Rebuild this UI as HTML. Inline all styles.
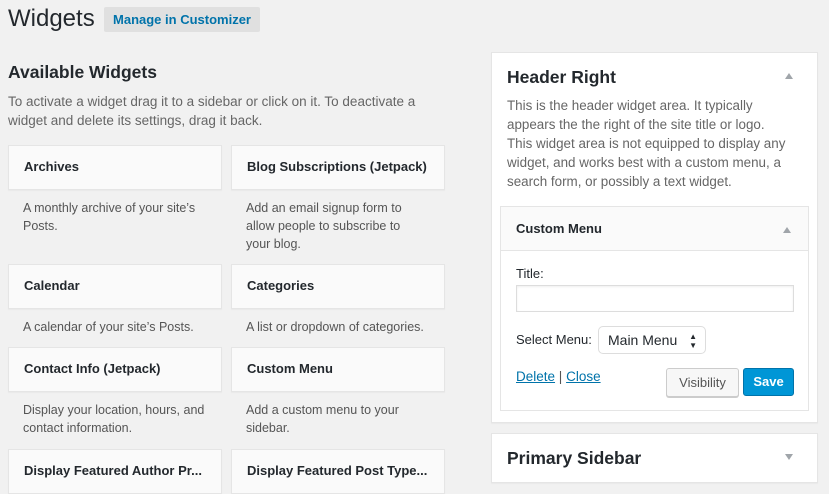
<!DOCTYPE html>
<html><head><meta charset="utf-8"><style>
*{box-sizing:border-box;margin:0;padding:0}
body{width:829px;height:491px;overflow:hidden;background:#f1f1f1;font-family:"Liberation Sans",sans-serif;color:#23282d;position:relative}
.a{position:absolute;white-space:nowrap}
.box{position:absolute;background:#fafafa;border:1px solid #e5e5e5;box-shadow:0 1px 1px rgba(0,0,0,.04);font-size:13px;font-weight:bold;padding:0 0 0 15px;line-height:42px;color:#23282d}
.d{position:absolute;font-size:12.5px;color:#555;line-height:18px;width:190px}
.panel{position:absolute;background:#fff;border:1px solid #e5e5e5;box-shadow:0 1px 1px rgba(0,0,0,.04)}
.tri{position:absolute;width:0;height:0;border-left:4px solid transparent;border-right:4px solid transparent}
</style></head><body>
<div class="a" style="left:8px;top:5px;font-size:24px;color:#23282d">Widgets</div>
<div class="a" style="left:104px;top:7px;width:156px;height:25px;background:#e0e0e0;border-radius:2px;color:#0073aa;font-size:13px;font-weight:bold;line-height:25px;text-align:center">Manage in Customizer</div>
<div class="a" style="left:8px;top:62px;font-size:17.5px;font-weight:bold">Available Widgets</div>
<div class="a" style="left:8px;top:92px;font-size:13.5px;color:#666;line-height:19px;white-space:normal;width:440px">To activate a widget drag it to a sidebar or click on it. To deactivate a widget and delete its settings, drag it back.</div>

<div class="box" style="left:8px;top:145px;width:214px;height:45px">Archives</div>
<div class="box" style="left:231px;top:145px;width:214px;height:45px">Blog Subscriptions (Jetpack)</div>
<div class="d" style="left:23px;top:199px">A monthly archive of your site’s Posts.</div>
<div class="d" style="left:246px;top:199px;width:175px">Add an email signup form to allow people to subscribe to your blog.</div>

<div class="box" style="left:8px;top:264px;width:214px;height:45px">Calendar</div>
<div class="box" style="left:231px;top:264px;width:214px;height:45px">Categories</div>
<div class="d" style="left:23px;top:318px;width:200px">A calendar of your site’s Posts.</div>
<div class="d" style="left:246px;top:318px;width:200px">A list or dropdown of categories.</div>

<div class="box" style="left:8px;top:347px;width:214px;height:45px">Contact Info (Jetpack)</div>
<div class="box" style="left:231px;top:347px;width:214px;height:45px">Custom Menu</div>
<div class="d" style="left:23px;top:401px">Display your location, hours, and contact information.</div>
<div class="d" style="left:246px;top:401px;width:170px">Add a custom menu to your sidebar.</div>

<div class="box" style="left:8px;top:449px;width:214px;height:45px">Display Featured Author Pr...</div>
<div class="box" style="left:231px;top:449px;width:214px;height:45px">Display Featured Post Type...</div>

<div class="panel" style="left:491px;top:52px;width:327px;height:371px">
 <div class="a" style="left:15px;top:14px;font-size:17.5px;font-weight:bold">Header Right</div>
 <div class="tri" style="left:293px;top:20px;border-bottom:6px solid #a0a5aa"></div>
 <div class="a" style="left:15px;top:43px;width:282px;white-space:normal;font-size:13.4px;color:#666;line-height:19px">This is the header widget area. It typically appears the the right of the site title or logo. This widget area is not equipped to display any widget, and works best with a custom menu, a search form, or possibly a text widget.</div>
 <div class="a" style="left:8px;top:153px;width:309px;height:205px;border:1px solid #e5e5e5;background:#fff">
  <div style="height:44px;background:#fafafa;border-bottom:1px solid #e5e5e5;padding-left:15px;line-height:43px;font-size:13px;font-weight:bold">Custom Menu</div>
  <div class="tri" style="left:282px;top:20px;border-bottom:6px solid #a0a5aa"></div>
  <div class="a" style="left:15px;top:59px;font-size:13px">Title:</div>
  <div class="a" style="left:15px;top:78px;width:278px;height:27px;border:1px solid #ddd;box-shadow:inset 0 1px 2px rgba(0,0,0,.07)"></div>
  <div class="a" style="left:15px;top:125px;font-size:13px">Select Menu:</div>
  <div class="a" style="left:97px;top:119px;width:108px;height:28px;border:1px solid #ddd;border-radius:5px;font-size:14px;line-height:26px;padding-left:9px">Main Menu<span style="position:absolute;right:8px;top:0;font-size:8px;line-height:9px;top:5px">▲<br>▼</span></div>
  <div class="a" style="left:15px;top:162px;font-size:13.5px;color:#0073aa"><u>Delete</u> <span style="color:#555">|</span> <u>Close</u></div>
  <div class="a" style="left:165px;top:161px;width:73px;height:29px;border:1px solid #ccc;border-radius:3px;background:#f7f7f7;font-size:13px;line-height:27px;text-align:center;color:#555;box-shadow:0 1px 0 #ccc">Visibility</div>
  <div class="a" style="left:242px;top:161px;width:51px;height:28px;border:1px solid #0073aa;border-radius:3px;background:#0096d6;font-size:13px;font-weight:bold;line-height:26px;text-align:center;color:#fff">Save</div>
 </div>
</div>

<div class="panel" style="left:491px;top:433px;width:327px;height:50px">
 <div class="a" style="left:15px;top:14px;font-size:17.5px;font-weight:bold">Primary Sidebar</div>
 <div class="tri" style="left:293px;top:20px;border-top:6px solid #a0a5aa"></div>
</div>
</body></html>
